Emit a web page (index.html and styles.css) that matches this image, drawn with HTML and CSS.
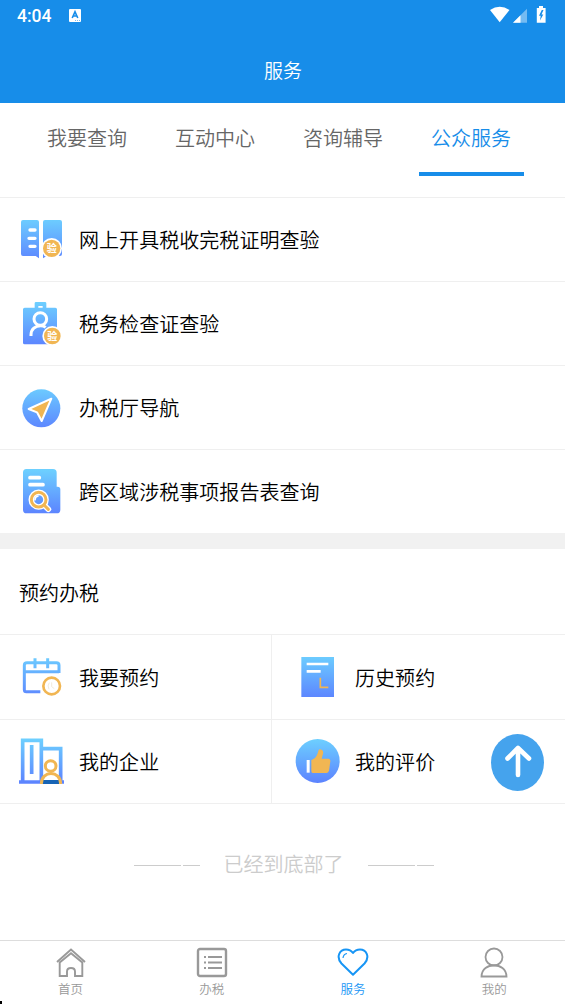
FILE: index.html
```html
<!DOCTYPE html>
<html lang="zh-CN">
<head>
<meta charset="utf-8">
<title>服务</title>
<link rel="stylesheet" href="styles.css">
</head>
<body>
<svg class="defs" width="0" height="0" aria-hidden="true">
  <defs>
    <linearGradient id="sky" gradientUnits="userSpaceOnUse" x1="0" y1="5" x2="0" y2="138">
      <stop offset="0" stop-color="#6dd0ff"/><stop offset="1" stop-color="#5c83ff"/>
    </linearGradient>
  </defs>
</svg>
<div class="app">
  <header class="header">
    <div class="status">
      <span class="time">4:04</span>
      <svg class="status-app" viewBox="0 0 12 13"><rect width="12" height="13" rx="1" fill="#fff"/><path d="M3.2 9 6 2.8 8.800 9M4.200 7h3.600" fill="none" stroke="#178de9" stroke-width="1.600"/><path d="M6 11.500h5" stroke="#7dbcf0" stroke-width="1" stroke-dasharray="1 1"/></svg>
      <svg class="status-icons" viewBox="0 0 57 18"><path d="M0 4Q9.700-2.500 19.500 4L9.700 16.200Z" fill="#fff"/><path d="M23 16.700 37 2.700v14z" fill="#74bbf2"/><path d="M23 16.700 30.500 9.200v7.500z" fill="#fff"/><path d="M47 2h2V0h4v2h2.600v14.700H46.800V2z" fill="#fff"/><path d="M51.800 4 49 9.700h1.700L50 14.500l3.300-6h-1.800l2-4.500z" fill="#178de9"/></svg>
    </div>
    <h1 class="title">服务</h1>
  </header>

  <nav class="tabs">
    <a class="tab">我要查询</a>
    <a class="tab">互动中心</a>
    <a class="tab">咨询辅导</a>
    <a class="tab tab-active">公众服务</a>
  </nav>

  <ul class="list">
    <li class="row">
      <svg class="icon" viewBox="0 0 144 144">
        <path d="M15 12H57q6 0 6 6V127L53 120H15q-6 0-6-6V18q0-6 6-6ZM81 12h45q6 0 6 6v96q0 6-6 6H86l-11 7V18q0-6 6-6Z" fill="url(#sky)"/>
        <path d="M36 42h15M33 67h18M36 91h15" stroke="#fff" stroke-width="10" stroke-linecap="round"/>
        <circle cx="101" cy="97" r="31" fill="#fff"/><circle cx="101" cy="97" r="26" fill="#f1b653"/>
        <text class="seal" x="101" y="109" text-anchor="middle">验</text>
      </svg>
      <span>网上开具税收完税证明查验</span>
    </li>
    <li class="row">
      <svg class="icon" viewBox="0 0 144 144">
        <path fill-rule="evenodd" d="M54 6H81q4 0 4 4V23h27q5 0 5 5V128q0 5-5 5H20q-5 0-5-5V28q0-5 5-5H50V10q0-4 4-4ZM61 18V23H74V18Z" fill="url(#sky)"/>
        <path d="M39 108V104C39 87 52 77 68 77q9 0 15 5" fill="none" stroke="#fff" stroke-width="9"/>
        <circle cx="67" cy="57" r="19" fill="none" stroke="#fff" stroke-width="9"/>
        <circle cx="103" cy="108" r="30" fill="#fff"/><circle cx="103" cy="108" r="25" fill="#f1b653"/>
        <text class="seal" x="103" y="119" text-anchor="middle">验</text>
      </svg>
      <span>税务检查证查验</span>
    </li>
    <li class="row">
      <svg class="icon" viewBox="0 0 144 144">
        <circle cx="70" cy="73" r="57" fill="url(#sky)"/>
        <path d="M100 44 32 75 57 85 71 111Z" fill="#f1b653" stroke="#fff" stroke-width="6" stroke-linejoin="round"/>
      </svg>
      <span>办税厅导航</span>
    </li>
    <li class="row">
      <svg class="icon" viewBox="0 0 144 144">
        <path d="M25 3h80q11 0 11 11V56h3q8 0 8 8v61q0 11-11 11H26q-11 0-11-11V14Q15 3 25 3Z" fill="url(#sky)"/>
        <path d="M36 29H64M36 50H75" stroke="#fff" stroke-width="11" stroke-linecap="round"/>
        <circle cx="62" cy="95" r="22" fill="none" stroke="#fff" stroke-width="17"/><path d="M78 111 91 124" stroke="#fff" stroke-width="17" stroke-linecap="round"/>
        <circle cx="62" cy="95" r="22" fill="none" stroke="#f1b653" stroke-width="9"/><path d="M78 111 91 124" stroke="#f1b653" stroke-width="9" stroke-linecap="round"/>
        <path d="M51 95q0-9 9-11" fill="none" stroke="#fff" stroke-width="5" stroke-linecap="round"/>
      </svg>
      <span>跨区域涉税事项报告表查询</span>
    </li>
  </ul>

  <section class="booking">
    <h2 class="heading">预约办税</h2>
    <div class="grid">
      <div class="cell">
        <svg class="icon" viewBox="0 0 144 144">
          <path d="M67 116H25q-6 0-6-6V37q0-8 8-8h88q8 0 8 8V60M19 56H123M51 16V46M89 16V46" fill="none" stroke="url(#sky)" stroke-width="9"/>
          <circle cx="101" cy="99" r="25" fill="#fff" stroke="#f1b653" stroke-width="8"/>
          <path d="M94 89q-7 9-1 20M101 88v13l8 6" fill="none" stroke="#eadfca" stroke-width="2"/>
        </svg>
        <span>我要预约</span>
      </div>
      <div class="cell cell-right">
        <svg class="icon" viewBox="0 0 144 144">
          <path d="M22 12h98v120H22z" fill="url(#sky)"/>
          <path d="M38 33h65M38 55h42" stroke="#fff" stroke-width="8"/>
          <path d="M79 74v29h24" fill="none" stroke="#f1b653" stroke-width="5"/>
        </svg>
        <span>历史预约</span>
      </div>
      <div class="cell">
        <svg class="icon" viewBox="0 0 144 144">
          <path d="M14 135V10H70V135M75 35H128V135M3 135H138M41 24V111" fill="none" stroke="url(#sky)" stroke-width="11"/>
          <path d="M72 141q0-30 26-30t27 30Z" fill="#fff"/>
          <path d="M73 129h50v12H70Z" fill="#1764b5"/>
          <circle cx="98" cy="87" r="16" fill="#fff" stroke="#f1b653" stroke-width="9"/>
          <path d="M70 141C70 99 128 99 128 141" fill="none" stroke="#f1b653" stroke-width="9"/>
        </svg>
        <span>我的企业</span>
      </div>
      <div class="cell cell-right">
        <svg class="icon" viewBox="0 0 144 144">
          <circle cx="71" cy="72" r="66" fill="url(#sky)"/>
          <path d="M38 69h9v38h-9z" fill="#fff"/>
          <path d="M52 69C63 65 67 60 71 49L74 39Q77 35 84 39 90 43 86 54L83 65H104Q110 66 109 73L105 101Q103 108 97 108H56Q52 108 52 103Z" fill="#f1b653"/>
        </svg>
        <span>我的评价</span>
      </div>
    </div>
    <button class="to-top" aria-label="返回顶部">
      <svg viewBox="0 0 53 57"><path d="M27 41V14M16.500 24.500 27 14l11 10.500" fill="none" stroke="#fff" stroke-width="4.600" stroke-linecap="round" stroke-linejoin="round"/></svg>
    </button>
  </section>

  <div class="end"><i class="rule"></i><span>已经到底部了</span><i class="rule"></i></div>

  <nav class="bottom">
    <a class="item">
      <svg viewBox="0 0 32 32"><path d="M2 16 16 3.500 30 16M4.700 16.500V30H12V25.500q0-3.500 4-3.500t4 3.500V30h7.300V16.500L16 7.300Z" fill="none" stroke="#999" stroke-width="1.900"/></svg>
      <span>首页</span>
    </a>
    <a class="item">
      <svg viewBox="0 0 32 32"><rect x="2" y="3" width="28" height="27" rx="2" fill="none" stroke="#999" stroke-width="2.400"/><path d="M12 11h14M12 16.500h14M12 22h14M8 11h2M8 16.500h2M8 22h2" stroke="#999" stroke-width="1.800"/></svg>
      <span>办税</span>
    </a>
    <a class="item item-active">
      <svg viewBox="0 0 32 32"><path d="M16 28.800 4.500 17.500C-1.500 10.500 3 3.500 9 3.500q4.500 0 7 3.500 2.500-3.500 7-3.500c6 0 10.500 7 4.500 14Z" fill="none" stroke="#1795f5" stroke-width="2" stroke-linejoin="round"/><path d="M6 12q.5-4 4-4.500" fill="none" stroke="#1795f5" stroke-width="1.200"/></svg>
      <span>服务</span>
    </a>
    <a class="item">
      <svg viewBox="0 0 32 32"><circle cx="16" cy="11" r="8.500" fill="none" stroke="#999" stroke-width="1.800"/><path d="M3.500 30.500C4 15.500 28 15.500 28.500 30.500Z" fill="none" stroke="#999" stroke-width="1.800"/></svg>
      <span>我的</span>
    </a>
    <i class="corner"></i>
  </nav>
</div>
</body>
</html>
```
FILE: styles.css
```css
* { box-sizing: border-box; }
body { margin: 0; background: #fff; color: #000; font-family: "Noto Sans CJK SC", sans-serif; font-size: 20px; font-weight: 350; line-height: 28px; }
h1, h2, ul { margin: 0; padding: 0; font-weight: inherit; list-style: none; }
.defs { position: absolute; }
.app { width: 565px; height: 1004px; display: flex; flex-direction: column; overflow: hidden; }

.header { height: 103px; background: #178de9; color: #fff; }
.status { height: 34px; display: flex; align-items: flex-start; padding: 6px 18px 0 17px; }
.time { width: 52px; font: 500 17.500px/20px Roboto, sans-serif; }
.status-app { width: 12px; height: 13px; margin-top: 3px; }
.status-icons { width: 57px; height: 18px; margin-left: auto; }
.title { text-align: center; font-size: 19px; line-height: 28px; padding: 22px 0 0 1px; }

.tabs { height: 95px; display: flex; padding: 0 30px 0 23px; border-bottom: 1px solid #efefef; }
.tab { flex: 1; height: 73px; color: #666; text-align: center; padding-top: 21px; }
.tab-active { color: #178de9; background: linear-gradient(#178de9, #178de9) 12px bottom / 105px 4px no-repeat; }

.list { border-bottom: 16px solid #f1f1f1; }
.row, .cell { height: 84px; display: flex; align-items: center; gap: 13px; padding-left: 18px; border-bottom: 1px solid #efefef; }
.row span, .cell span { padding-top: 1px; letter-spacing: .05px; }
.cell:nth-child(-n+2) span { padding-top: 2px; }
.row:last-child { height: 83px; border-bottom: 0; }
.icon { width: 48px; height: 48px; flex: none; }
.seal { font: 700 30px "Noto Sans CJK SC", sans-serif; fill: #fff; }

.booking { position: relative; }
.heading { height: 86px; padding: 30px 19px 0; font-size: 20px; border-bottom: 1px solid #efefef; }
.grid { display: grid; grid-template-columns: 272px 1fr; grid-auto-rows: 84.500px; }
.cell { height: auto; border-right: 1px solid #efefef; }
.cell-right { padding-left: 22px; border-right: 0; }
.to-top { position: absolute; right: 21px; bottom: 13px; width: 53px; height: 57px; padding: 0; border: 0; border-radius: 50%; background: #45a3ed; }
.to-top svg { display: block; width: 53px; height: 57px; }

.end { height: 136px; display: flex; justify-content: center; align-items: flex-start; gap: 24px; padding: 46px 0 0 2px; color: #ccc; }
.rule { width: 66px; height: 1px; margin-top: 15px; background: linear-gradient(to right, #ccc 47px, transparent 47px 49px, #ccc 49px); }

.bottom { position: relative; height: 64px; display: flex; border-top: 1.500px solid #ddd; }
.item { flex: 1; display: flex; flex-direction: column; align-items: center; padding: 5px 0 0; color: #999; font-size: 12.500px; line-height: 18px; }
.item svg { width: 32px; height: 32px; margin-bottom: 2px; }
.item-active { color: #1795f5; }
.corner { position: absolute; left: 0; bottom: 0; width: 2px; height: 3px; background: #000; }
```
